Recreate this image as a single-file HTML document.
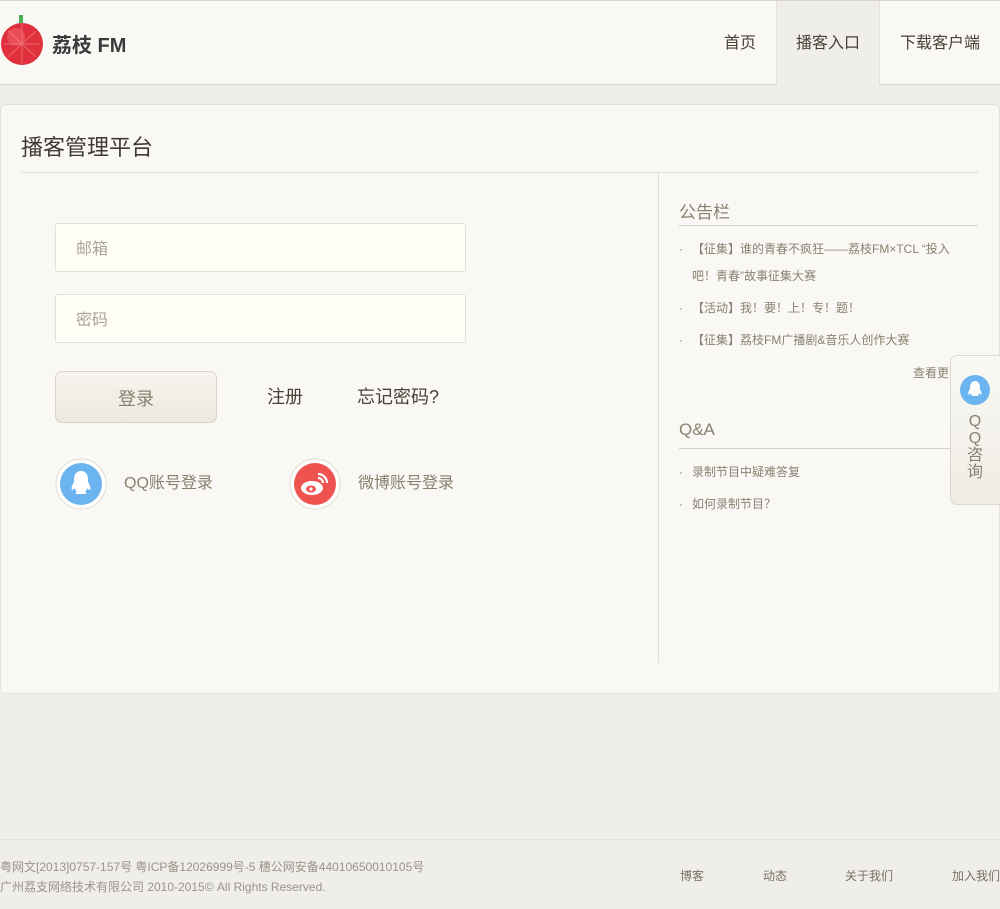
<!DOCTYPE html>
<html><head><meta charset="utf-8"><style>
*{margin:0;padding:0;box-sizing:border-box}
body{width:1000px;height:909px;background:#efeeea;font-family:"Liberation Sans","Noto Sans CJK SC",sans-serif;position:relative;overflow:hidden}
.a{position:absolute;white-space:nowrap}
#hd{position:absolute;left:0;top:0;width:1000px;height:85px;background:#f9f8f4;border-top:1px solid #d8d4c6;border-bottom:1px solid #dddad2}
.nav{position:absolute;top:0;height:84px;line-height:86px;font-size:16px;color:#4a4035;text-align:center}
#card{position:absolute;left:0;top:104px;width:1000px;height:590px;background:#f9f8f4;border:1px solid #e3e1da;border-radius:5px}
.inp{position:absolute;left:55px;width:411px;height:49px;background:#fffef6;border:1px solid #e2e0d8;border-radius:3px;font-size:16px;color:#aaa59a;padding-left:20px;line-height:51px}
.gray{color:#8a8070}
.li{position:absolute;left:679px;font-size:12px;color:#8a8070;line-height:32px;width:290px;white-space:normal}
.li b{font-weight:normal;position:absolute;left:0}
.li span{display:block;padding-left:13px}
</style></head><body>
<div id="hd">
<svg class="a" style="left:0;top:14px" width="44" height="52" viewBox="0 0 44 52"><rect x="19" y="0" width="4" height="8" fill="#4caf50"/><circle cx="22" cy="29" r="21" fill="#e0303d"/><circle cx="16" cy="22" r="9" fill="#f0606a" opacity=".6"/><path d="M4 29h36M22 9v40M8 16l28 26M36 16L8 42" stroke="#f48a90" stroke-width="1" opacity=".6"/></svg>
<div class="a" style="left:52px;top:28px;font-size:20px;font-weight:bold;color:#3a3a3a">荔枝 FM</div>
<div class="nav" style="left:704px;width:72px">首页</div>
<div class="nav" style="left:776px;width:104px;background:#efeeea;border-left:1px solid #e3e1da;border-right:1px solid #e3e1da">播客入口</div>
<div class="nav" style="left:880px;width:120px">下载客户端</div>
</div>
<div id="card"></div>
<div class="a" style="left:21px;top:130px;font-size:22px;color:#3f3a32">播客管理平台</div>
<div class="a" style="left:21px;top:172px;width:957px;height:1px;background:#e0ddd5"></div>
<div class="a" style="left:658px;top:173px;width:1px;height:490px;background:#e0ddd5"></div>
<div class="inp" style="top:223px">邮箱</div>
<div class="inp" style="top:294px">密码</div>
<div class="a" style="left:55px;top:371px;width:162px;height:52px;border:1px solid #d8d3c4;border-radius:7px;background:linear-gradient(#f6f4ee,#ece9e0);text-align:center;line-height:54px;font-size:18px;color:#8a8070">登录</div>
<div class="a" style="left:267px;top:383px;font-size:18px;color:#4a4035">注册</div>
<div class="a" style="left:357px;top:383px;font-size:18px;color:#4a4035">忘记密码?</div>
<svg class="a" style="left:55px;top:458px" width="52" height="52" viewBox="0 0 52 52"><circle cx="26" cy="26" r="25" fill="#fff" stroke="#e0dcd2"/><circle cx="26" cy="26" r="21" fill="#6cb4ef"/><path d="M26 13c-5 0-7 4-7 8v3c-2 3-3 6-2 8 1 0 2-1 3-2 0 2 1 3 2 4-2 1-2 2 0 2h8c2 0 2-1 0-2 1-1 2-2 2-4 1 1 2 2 3 2 1-2 0-5-2-8v-3c0-4-2-8-7-8z" fill="#fff"/></svg>
<div class="a gray" style="left:124px;top:469px;font-size:16px">QQ账号登录</div>
<svg class="a" style="left:289px;top:458px" width="52" height="52" viewBox="0 0 52 52"><circle cx="26" cy="26" r="25" fill="#fff" stroke="#e0dcd2"/><circle cx="26" cy="26" r="21" fill="#ef5350"/><ellipse cx="23" cy="30" rx="11" ry="7" fill="#fff"/><ellipse cx="22" cy="31" rx="5" ry="3.5" fill="#ef5350"/><circle cx="22" cy="31" r="1.6" fill="#fff"/><path d="M29 16a9 9 0 0 1 9 9M29 20a5 5 0 0 1 5 5" stroke="#fff" stroke-width="2.2" fill="none"/></svg>
<div class="a gray" style="left:358px;top:469px;font-size:16px">微博账号登录</div>

<div class="a gray" style="left:679px;top:198px;font-size:17px">公告栏</div>
<div class="a" style="left:679px;top:225px;width:299px;height:1px;background:#d6d2c8"></div>
<div class="li" style="top:236px;line-height:27px"><b>·</b><span>【征集】谁的青春不疯狂——荔枝FM×TCL “投入吧！青春”故事征集大赛</span></div>
<div class="li" style="top:292px"><b>·</b><span>【活动】我！要！上！专！题！</span></div>
<div class="li" style="top:324px"><b>·</b><span>【征集】荔枝FM广播剧&amp;音乐人创作大赛</span></div>
<div class="a gray" style="left:913px;top:364px;font-size:12px">查看更多</div>
<div class="a gray" style="left:679px;top:420px;font-size:17px">Q&amp;A</div>
<div class="a" style="left:679px;top:448px;width:299px;height:1px;background:#d6d2c8"></div>
<div class="li" style="top:456px"><b>·</b><span>录制节目中疑难答复</span></div>
<div class="li" style="top:488px"><b>·</b><span>如何录制节目？</span></div>

<div class="a" style="left:950px;top:355px;width:52px;height:150px;background:linear-gradient(#f9f8f4,#efece4);border:1px solid #dcd8cc;border-radius:7px 0 0 7px"></div>
<svg class="a" style="left:960px;top:375px" width="30" height="30" viewBox="0 0 30 30"><circle cx="15" cy="15" r="15" fill="#6cb4ef"/><path d="M15 6c-3 0-5 3-5 6v2c-2 2-2 5-1 6l2-2c0 2 1 2 1 3h6c0-1 1-1 1-3l2 2c1-1 0-4-1-6v-2c0-3-2-6-5-6z" fill="#fff"/></svg>
<div class="a gray" style="left:966px;top:413px;font-size:16px;line-height:17px;width:18px;text-align:center;white-space:normal">Q Q 咨 询</div>

<div class="a" style="left:0;top:839px;width:1000px;height:1px;background:#e3e1da"></div>
<div class="a" style="left:0;top:858px;font-size:12px;color:#9a9388">粤网文[2013]0757-157号 粤ICP备12026999号-5 穗公网安备44010650010105号</div>
<div class="a" style="left:0;top:878px;font-size:12px;color:#9a9388">广州荔支网络技术有限公司 2010-2015© All Rights Reserved.</div>
<div class="a" style="left:680px;top:867px;font-size:12px;color:#7a7060">博客</div>
<div class="a" style="left:763px;top:867px;font-size:12px;color:#7a7060">动态</div>
<div class="a" style="left:845px;top:867px;font-size:12px;color:#7a7060">关于我们</div>
<div class="a" style="left:952px;top:867px;font-size:12px;color:#7a7060">加入我们</div>
</body></html>
